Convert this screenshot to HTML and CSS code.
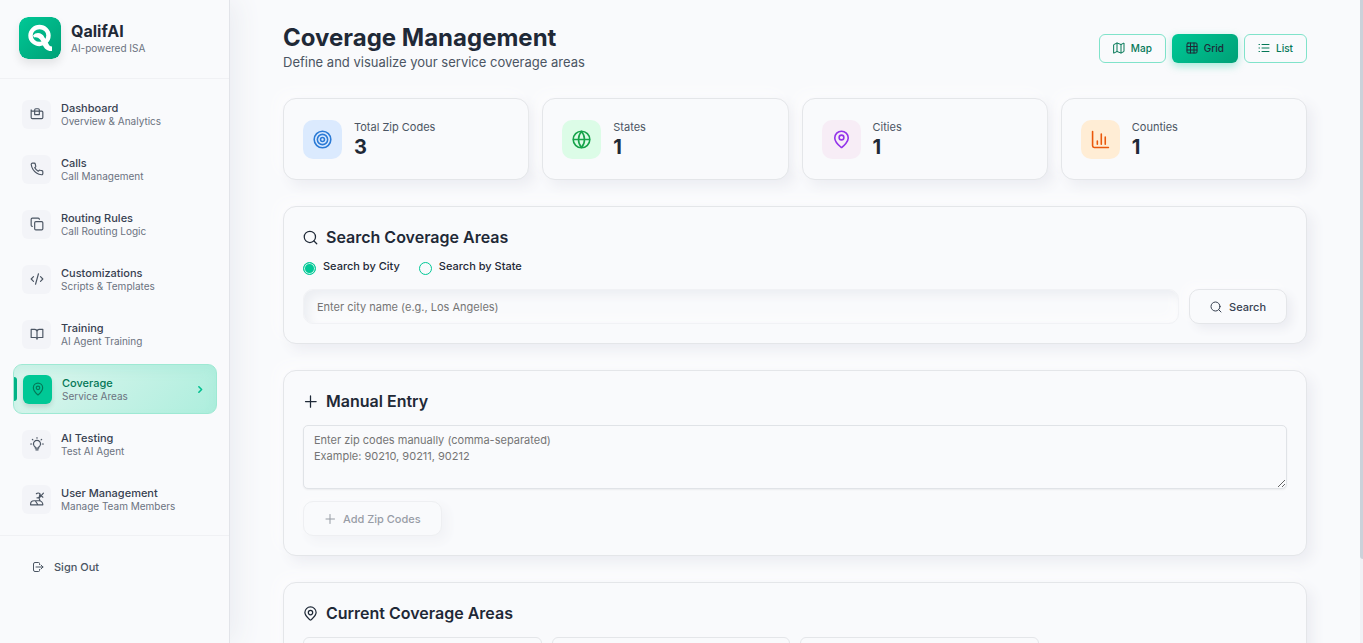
FILE: index.html
```html
<!DOCTYPE html>
<html lang="en">
<head>
<meta charset="utf-8">
<title>Coverage Management</title>
<meta name="viewport" content="width=device-width, initial-scale=1">
<link rel="stylesheet" href="styles.css">
</head>
<body>
<div class="app">
  <aside class="sidebar">
    <div class="brand">
      <svg class="brand-logo" viewBox="0 0 42 42" aria-hidden="true">
        <defs><linearGradient id="logo" x1="0" y1="0" x2="1" y2="1"><stop offset="0" stop-color="#00c896"/><stop offset="1" stop-color="#00a076"/></linearGradient></defs>
        <rect width="42" height="42" rx="9" fill="url(#logo)"/>
        <ellipse cx="20.500" cy="18.500" rx="9" ry="8.500" fill="none" stroke="#fff" stroke-width="4.400"/>
        <path d="M14 18.500C17 14.500 23.500 15.500 25.500 20.500L29 26C30 28.500 31 29.500 33 29.500V34C28.500 34.500 25.500 32 23.500 27.500C22 22.500 19.500 19.500 15 20.500Z" fill="#fff"/>
      </svg>
      <div>
        <div class="brand-name">QalifAI</div>
        <div class="brand-tag">AI-powered ISA</div>
      </div>
    </div>
    <nav class="nav">
      <a class="nav-item" href="#"><span class="nav-icon"><svg class="icon" viewBox="0 0 24 24"><path d="M2 5v13a2 2 0 0 0 2 2h16a2 2 0 0 0 2-2V9a2 2 0 0 0-2-2H4a2 2 0 0 1-2-2M8 5a2 2 0 0 1 2-2h4a2 2 0 0 1 2 2v8H8z"/></svg></span><span class="nav-text"><span class="nav-title">Dashboard</span><span class="nav-sub">Overview &amp; Analytics</span></span></a>
      <a class="nav-item" href="#"><span class="nav-icon"><svg class="icon" viewBox="0 0 24 24"><path d="M22 16.900v3a2 2 0 0 1-2.200 2 19.800 19.800 0 0 1-8.600-3.100 19.500 19.500 0 0 1-6-6 19.800 19.800 0 0 1-3.100-8.600A2 2 0 0 1 4.100 2h3a2 2 0 0 1 2 1.700c.1 1 .4 1.900.7 2.800a2 2 0 0 1-.4 2.100L8.100 9.900a16 16 0 0 0 6 6l1.300-1.300a2 2 0 0 1 2.100-.4c.9.300 1.800.6 2.800.7a2 2 0 0 1 1.700 2z"/></svg></span><span class="nav-text"><span class="nav-title">Calls</span><span class="nav-sub">Call Management</span></span></a>
      <a class="nav-item" href="#"><span class="nav-icon"><svg class="icon" viewBox="0 0 24 24"><rect x="8" y="8" width="14" height="14" rx="2"/><path d="M4 16a2 2 0 0 1-2-2V4a2 2 0 0 1 2-2h10a2 2 0 0 1 2 2"/></svg></span><span class="nav-text"><span class="nav-title">Routing Rules</span><span class="nav-sub">Call Routing Logic</span></span></a>
      <a class="nav-item" href="#"><span class="nav-icon"><svg class="icon" viewBox="0 0 24 24"><path d="m18 16 4-4-4-4M6 8l-4 4 4 4M14.500 3l-5 18"/></svg></span><span class="nav-text"><span class="nav-title">Customizations</span><span class="nav-sub">Scripts &amp; Templates</span></span></a>
      <a class="nav-item" href="#"><span class="nav-icon"><svg class="icon" viewBox="0 0 24 24"><path d="M2 4h6a4 4 0 0 1 4 4v13a3 3 0 0 0-3-3H2zM22 4h-6a4 4 0 0 0-4 4v13a3 3 0 0 1 3-3h7z"/></svg></span><span class="nav-text"><span class="nav-title">Training</span><span class="nav-sub">AI Agent Training</span></span></a>
      <a class="nav-item nav-item-active" href="#" aria-current="page"><span class="nav-icon"><svg class="icon" viewBox="0 0 24 24"><path d="M20 10c0 5-5.500 10.200-7.400 11.800a1 1 0 0 1-1.200 0C9.500 20.200 4 15 4 10a8 8 0 0 1 16 0"/><circle cx="12" cy="10" r="3"/></svg></span><span class="nav-text"><span class="nav-title">Coverage</span><span class="nav-sub">Service Areas</span></span><svg class="nav-arrow" viewBox="0 0 24 24"><path d="m9 17 5-5-5-5"/></svg></a>
      <a class="nav-item" href="#"><span class="nav-icon"><svg class="icon" viewBox="0 0 24 24"><path d="M9 17a6 6 0 1 1 6 0v2H9zM10 22h4M12 1v1M1 12h2M21 12h2M4 4l1 1M20 4l-1 1"/></svg></span><span class="nav-text"><span class="nav-title">AI Testing</span><span class="nav-sub">Test AI Agent</span></span></a>
      <a class="nav-item" href="#"><span class="nav-icon"><svg class="icon" viewBox="0 0 24 24"><path d="M1 22v-1a6 6 0 0 1 6-6h8a7 7 0 0 1 7 7zM9 15l4 6M11 3a4 4 0 0 1 6 0l-1 5a4 4 0 0 1-4 2M17 4l5 5M23 2l-7 8M15 10l2 4"/></svg></span><span class="nav-text"><span class="nav-title">User Management</span><span class="nav-sub">Manage Team Members</span></span></a>
    </nav>
    <div class="sidebar-foot">
      <button class="signout" type="button"><svg class="icon-sm" viewBox="0 0 24 24"><path d="M15 7V5a2 2 0 0 0-2-2H6a3 3 0 0 0-3 3v12a3 3 0 0 0 3 3h7a2 2 0 0 0 2-2v-2M8 12h14M18 8l4 4-4 4"/></svg>Sign Out</button>
    </div>
  </aside>

  <main class="main">
    <div class="content">
      <header class="page-head">
        <div>
          <h1 class="page-title">Coverage Management</h1>
          <p class="page-sub">Define and visualize your service coverage areas</p>
        </div>
        <div class="views">
          <button class="view" type="button"><svg class="icon-sm" viewBox="0 0 24 24"><path d="M2 5l6-3 8 3 6-3v17l-6 3-8-3-6 3zM8 2v17M16 5v17"/></svg>Map</button>
          <button class="view view-active" type="button" aria-pressed="true"><svg class="icon-sm" viewBox="0 0 24 24"><rect x="2" y="2" width="20" height="20" rx="2"/><path d="M2 9h20M2 16h20M9 2v20M16 2v20"/></svg>Grid</button>
          <button class="view" type="button"><svg class="icon-sm" viewBox="0 0 24 24"><path d="M8 5h14M8 12h14M8 19h14M2 5h1M2 12h1M2 19h1"/></svg>List</button>
        </div>
      </header>

      <section class="stats">
        <div class="stat"><span class="stat-icon stat-blue"><svg class="icon-lg" viewBox="0 0 24 24"><circle cx="12" cy="12" r="10.500"/><circle cx="12" cy="12" r="6.500"/><circle cx="12" cy="12" r="2.500"/></svg></span><div><div class="stat-label">Total Zip Codes</div><div class="stat-value">3</div></div></div>
        <div class="stat"><span class="stat-icon stat-green"><svg class="icon-lg" viewBox="0 0 24 24"><circle cx="12" cy="12" r="10.500"/><path d="M2 12h20M12 2a15 15 0 0 1 0 20 15 15 0 0 1 0-20"/></svg></span><div><div class="stat-label">States</div><div class="stat-value">1</div></div></div>
        <div class="stat"><span class="stat-icon stat-purple"><svg class="icon-lg" viewBox="0 0 24 24"><path d="M20.500 10c0 5-5.500 10.200-7.900 11.800a1 1 0 0 1-1.200 0C9.500 20.200 3.500 15 3.500 10a8.500 8.500 0 0 1 17 0"/><circle cx="12" cy="9.500" r="3"/></svg></span><div><div class="stat-label">Cities</div><div class="stat-value">1</div></div></div>
        <div class="stat"><span class="stat-icon stat-orange"><svg class="icon-lg" viewBox="0 0 24 24"><path d="M2 2v18a2 2 0 0 0 2 2h18M8 18v-4M13 18V5M18 18V9"/></svg></span><div><div class="stat-label">Counties</div><div class="stat-value">1</div></div></div>
      </section>

      <section class="panel">
        <h2 class="panel-title"><svg class="icon-md" viewBox="0 0 24 24"><circle cx="11" cy="11" r="9"/><path d="m22 22-4.500-4.500"/></svg>Search Coverage Areas</h2>
        <div class="radios">
          <label class="radio"><input type="radio" name="mode" checked><span>Search by City</span></label>
          <label class="radio"><input type="radio" name="mode"><span>Search by State</span></label>
        </div>
        <form class="search-row">
          <input class="search-input" type="text" aria-label="City name" placeholder="Enter city name (e.g., Los Angeles)">
          <button class="btn" type="button"><svg class="icon-sm" viewBox="0 0 24 24"><circle cx="11" cy="11" r="9"/><path d="m22 22-4.500-4.500"/></svg>Search</button>
        </form>
      </section>

      <section class="panel">
        <h2 class="panel-title"><svg class="icon-md" viewBox="0 0 24 24"><path d="M4 12h17M12 3v18"/></svg>Manual Entry</h2>
        <textarea class="zip-input" aria-label="Zip codes" placeholder="Enter zip codes manually (comma-separated)&#10;Example: 90210, 90211, 90212"></textarea>
        <button class="btn" type="button" disabled><svg class="icon-sm" viewBox="0 0 24 24"><path d="M4 12h17M12 3v18"/></svg>Add Zip Codes</button>
      </section>

      <section class="panel">
        <h2 class="panel-title"><svg class="icon-md" viewBox="0 0 24 24"><path d="M21 10.500c0 5-6 9.700-8.200 11.700a1.200 1.200 0 0 1-1.600 0C9 20.200 3 15.500 3 10.500a9 9 0 0 1 18 0"/><circle cx="12" cy="10.500" r="3.500"/></svg>Current Coverage Areas</h2>
        <div class="areas"><div class="area"></div><div class="area"></div><div class="area"></div></div>
      </section>
    </div>
  </main>
  <div class="scroll-track" aria-hidden="true"><div class="scroll-thumb"></div></div>
</div>
</body>
</html>
```
FILE: styles.css
```css
* { box-sizing: border-box; }
body {
  margin: 0;
  overflow: hidden;
  background: #f9fafc;
  color: #1f2937;
  font-family: Inter, "Liberation Sans", sans-serif;
  font-size: 11px;
  line-height: 16px;
}
h1, h2, p { margin: 0; }
button, input, textarea { font: inherit; color: inherit; }
a { color: inherit; text-decoration: none; }
svg { fill: none; stroke: currentColor; stroke-width: 2; stroke-linecap: round; stroke-linejoin: round; flex: none; }

.app { display: flex; height: 100vh; }

/* Sidebar */
.sidebar {
  flex: none;
  width: 230px;
  border-right: 1px solid #e2e4e9;
  background: #f9fafc;
  box-shadow: 6px 0 26px #eaecf1;
  z-index: 1;
}
.brand {
  display: flex;
  align-items: center;
  gap: 10px;
  padding: 17px 19px 19px;
  border-bottom: 1px solid #f0f1f4;
}
.brand-logo { width: 42px; height: 42px; stroke: none; border-radius: 9px; box-shadow: 0 5px 10px rgba(0, 0, 0, .09); }
.brand-name { font-size: 16px; line-height: 20px; font-weight: 700; }
.brand-tag { font-size: 10px; line-height: 14px; color: #6b7280; }
.nav { display: flex; flex-direction: column; gap: 5px; padding: 10px 12px 11px 13px; border-bottom: 1px solid #f0f1f4; }
.nav-item { display: flex; align-items: center; gap: 10px; height: 50px; padding: 0 9px; border-radius: 9px; }
.nav-icon { display: grid; place-items: center; width: 29px; height: 29px; border-radius: 6px; background: #f3f4f8; color: #4b5563; }
.nav-text { display: flex; flex-direction: column; flex: 1; }
.nav-title { font-size: 11px; line-height: 14px; font-weight: 500; color: #374151; }
.nav-sub { font-size: 10px; line-height: 13px; color: #6b7280; }
.nav-item-active {
  border: 1px solid #9ee9d3;
  background: linear-gradient(135deg, #dff6ef, #adeedd);
  box-shadow: inset 0 6px 10px rgba(150, 230, 208, .3);
  position: relative;
}
.nav-item-active::before { content: ""; position: absolute; left: 0; top: 12px; bottom: 12px; width: 3px; border-radius: 0 3px 3px 0; background: #00b386; }
.nav-item-active .nav-icon { background: #00c896; color: #047857; box-shadow: 0 3px 5px rgba(0, 0, 0, .12); }
.nav-item-active .nav-title { color: #047857; }
.nav-arrow { width: 13px; height: 13px; color: #00c08f; stroke-width: 3; }
.sidebar-foot { padding: 14px 13px; }
.signout { display: flex; align-items: center; gap: 10px; padding: 9px 19px; border: 0; background: none; color: #4b5563; font-weight: 500; }

.icon { width: 14px; height: 14px; }
.icon-sm { width: 12px; height: 12px; }
.icon-md { width: 15px; height: 15px; }
.icon-lg { width: 19px; height: 19px; }

/* Page */
.main { flex: 1; min-width: 0; overflow: hidden; padding: 24px 16px 0; }
.content { display: flex; flex-direction: column; gap: 26px; max-width: 1024px; margin: 0 auto; }
.page-head { display: flex; justify-content: space-between; align-items: center; }
.page-title { font-size: 24px; line-height: 28px; font-weight: 700; }
.page-sub { font-size: 13px; line-height: 20px; color: #4b5563; }
.views { display: flex; gap: 6px; }
.view {
  display: flex; align-items: center; gap: 6px;
  height: 29px; padding: 0 13px;
  border: 1px solid #80e3ca; border-radius: 6px;
  background: #f9fafc; color: #047857;
  font-size: 10px; font-weight: 500;
}
.view-active { border-color: transparent; background: linear-gradient(135deg, #00c896, #00a076) border-box; color: #1f2937; box-shadow: 0 3px 8px rgba(0, 200, 150, .35); }

.stats { display: grid; grid-template-columns: repeat(4, 1fr); gap: 13px; }
.stat, .panel { border: 1px solid #e4e6e9; border-radius: 13px; background: #f9fafc; box-shadow: 6px 6px 13px #ecedf2, -6px -6px 13px #fcfcfd; }
.stat { display: flex; align-items: center; gap: 12px; padding: 19px; height: 82px; }
.stat-icon { display: grid; place-items: center; width: 39px; height: 39px; border-radius: 10px; }
.stat-blue { background: #dbeafe; color: #2b7bd6; }
.stat-green { background: #dcfce7; color: #16a34a; }
.stat-purple { background: #f7edf6; color: #9333ea; }
.stat-orange { background: #ffedd5; color: #ea580c; }
.stat-label { color: #4b5563; line-height: 16px; }
.stat-value { font-size: 20px; line-height: 25px; font-weight: 700; }

.panel { padding: 19px; }
.panel-title { display: flex; align-items: center; gap: 8px; font-size: 16px; line-height: 22px; font-weight: 600; }
.radios { display: flex; gap: 19px; margin-top: 10px; }
.radio { display: flex; gap: 7px; font-weight: 500; }
.radio input { appearance: none; width: 13px; height: 13px; margin: 4px 0 0; border: 1px solid #00c896; border-radius: 50%; }
.radio input:checked { background: #00c896; box-shadow: inset 0 0 0 1px #bff1e4; }
.search-row { display: flex; gap: 10px; margin-top: 14px; }
.search-input {
  flex: 1; min-width: 0; height: 35px; padding: 0 13px;
  border: 1px solid #f1f2f5; border-radius: 10px; background: #f9fafc;
  box-shadow: inset 5px 5px 10px #eceef2, inset -5px -5px 10px #fcfcfd;
}
.search-input::placeholder, .zip-input::placeholder { color: #757575; opacity: 1; }
.btn {
  display: flex; align-items: center; gap: 7px;
  height: 35px; padding: 0 20px;
  border: 1px solid #e4e6e9; border-radius: 10px;
  background: #f9fafc; color: #374151; font-weight: 500;
  box-shadow: 5px 5px 10px #ecedf2, -5px -5px 10px #fcfcfd;
}
.btn:disabled { opacity: .5; }
.zip-input {
  display: block; width: 100%; height: 64px; margin: 13px 0 12px; padding: 6px 10px;
  border: 1px solid #e0e3e7; border-radius: 5px; background: #f9fafc;
  box-shadow: 0 1px 2px rgba(0, 0, 0, .06);
  resize: vertical;
}
.areas { display: grid; grid-template-columns: repeat(4, 1fr); gap: 10px; margin-top: 13px; }
.area { height: 80px; border: 1px solid #e4e6e9; border-radius: 6px; }

.scroll-track { flex: none; width: 3px; background: #f1f2f6; }
.scroll-thumb { height: 87%; background: #cbd2da; border-radius: 0 0 0 3px; }
```
